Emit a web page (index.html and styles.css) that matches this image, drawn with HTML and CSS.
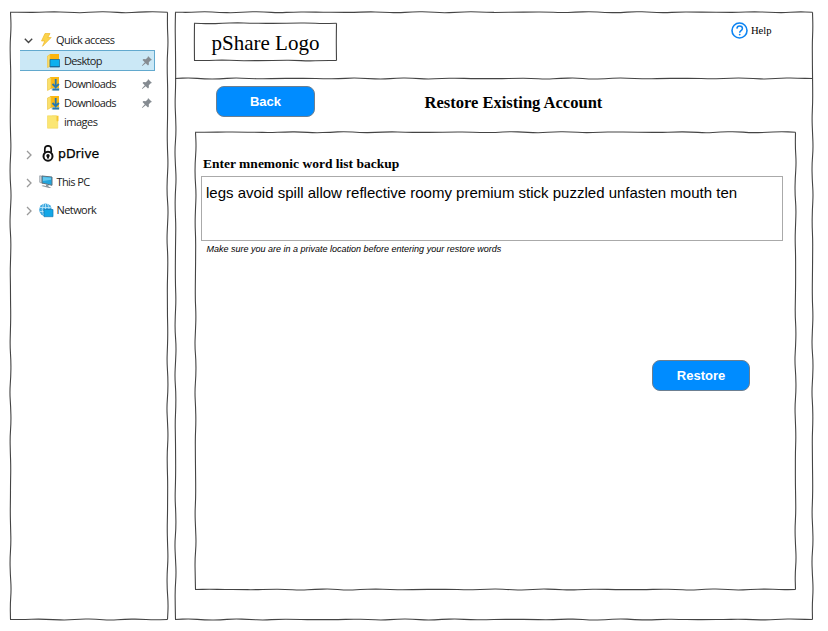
FILE: index.html
```html
<!DOCTYPE html>
<html lang="en">
<head>
<meta charset="utf-8">
<title>Restore Existing Account</title>
<link rel="stylesheet" href="styles.css">
</head>
<body>
<svg class="defs" aria-hidden="true">
  <symbol id="pin" viewBox="0 0 12 12"><path d="M7 1l4 4-1.200.3-2 2 .1 2.200L7 10.500 4.700 8.200 1.300 11 .9 10.600 3.800 7.300 1.500 5l1-.9 2.300.1 2-2z" fill="#858b91"/></symbol>
  <symbol id="chevron" viewBox="0 0 6 10"><path d="M1 1l4 4-4 4" fill="none" stroke="#9a9a9a" stroke-width="1.300"/></symbol>
  <symbol id="download" viewBox="0 0 13 14"><path d="M3 0h9v12H3z" fill="#fcb913"/><path d="M.5 2L4 .5v11L.5 13.500z" fill="#fbe06c" stroke="#eac23c" stroke-width=".6"/><path d="M4.500 11h8v2.500h-8z" fill="#cfd5c0"/><path d="M8.700 2v8M5.500 7l3.200 3.200L11.900 7M5.500 12.500h6.500" fill="none" stroke="#2478ad" stroke-width="1.800"/></symbol>
</svg>
<div class="app">
  <nav class="sidebar sketch" data-edges="trbl">
    <div class="row group quick">
      <svg class="chev" width="9" height="6" viewBox="0 0 9 6"><path d="M.8.8l3.700 3.700L8.200.8" fill="none" stroke="#444" stroke-width="1.400"/></svg>
      <svg class="gicon" width="14" height="14" viewBox="0 0 14 14"><path d="M5.500.5h5L8.300 4.500h3.400L3 13.300 5.200 8H2z" fill="#fbd34a" stroke="#efb92b" stroke-width=".7"/></svg>
      <span class="t-quick">Quick access</span>
    </div>
    <div class="row item selected">
      <svg class="ficon" width="13" height="14" viewBox="0 0 13 14"><path d="M3 0h9v6H3z" fill="#fcb50d"/><path d="M.5 2L3 .5v12L.5 13.500z" fill="#fbdc63" stroke="#f1bd35" stroke-width=".6"/><path d="M3 5.500h9.600V13H3z" fill="#0cb0ee" stroke="#176a9b" stroke-width=".8"/><path d="M3 12h9.600v1H3z" fill="#176a9b"/></svg>
      <span class="t-desktop">Desktop</span>
      <svg class="pin" width="12" height="12"><use href="#pin"/></svg>
    </div>
    <div class="row item dl1">
      <svg class="ficon" width="13" height="14"><use href="#download"/></svg>
      <span class="t-down">Downloads</span>
      <svg class="pin" width="12" height="12"><use href="#pin"/></svg>
    </div>
    <div class="row item dl2">
      <svg class="ficon" width="13" height="14"><use href="#download"/></svg>
      <span class="t-down">Downloads</span>
      <svg class="pin" width="12" height="12"><use href="#pin"/></svg>
    </div>
    <div class="row item images">
      <svg class="ficon" width="13" height="14" viewBox="0 0 13 14"><path d="M5 .8h6.500V6L9 8z" fill="#f7c52f"/><path d="M.5.800H9.500v5l1.300.7v6.700H.5z" fill="#fbe673" stroke="#f3d75b" stroke-width=".6"/></svg>
      <span class="t-images">images</span>
    </div>
    <div class="row group pdrive">
      <svg class="chev" width="6" height="10"><use href="#chevron"/></svg>
      <svg class="gicon" width="12" height="17" viewBox="0 0 12 17"><path d="M2.800 7V4a3.200 3.200 0 0 1 6.400 0V7" fill="none" stroke="#111" stroke-width="1.700"/><circle cx="6" cy="11.200" r="4.500" fill="#fff" stroke="#111" stroke-width="2"/><circle cx="6" cy="10.700" r="1.700" fill="#111"/><path d="M5.400 10h1.200l.5 3.500H4.900z" fill="#111"/></svg>
      <span class="t-pdrive">pDrive</span>
    </div>
    <div class="row group thispc">
      <svg class="chev" width="6" height="10"><use href="#chevron"/></svg>
      <svg class="gicon" width="15" height="14" viewBox="0 0 15 14"><path d="M.7.800l3 .4v7.300l-3-1.200z" fill="#d5dade" stroke="#89949c" stroke-width=".7"/><path d="M3 1l10 1v8.300L3 8z" fill="#22a5dd" stroke="#60717c" stroke-width="1"/><path d="M4 2l8 .8v2L4 6z" fill="#64c9ef"/><path d="M7 9.300l2.500.6v1.500L12.500 13H10l-7.500-2 1.500-.7 3 .7z" fill="#8c979e"/></svg>
      <span class="t-pc">This PC</span>
    </div>
    <div class="row group network">
      <svg class="chev" width="6" height="10"><use href="#chevron"/></svg>
      <svg class="gicon" width="15" height="15" viewBox="0 0 15 15"><circle cx="6.500" cy="6.800" r="6.300" fill="#3ba7df"/><path d="M.8 4.500h11M.8 8.500h6M6.500.800v8M4.500 1Q1.800 6.500 4.500 12M8.500 1q1.500 2.500 1.500 5" fill="none" stroke="#c5eafa" stroke-width=".8"/><path d="M5 6.500h9v7.200H5z" fill="#12a7e7" stroke="#1678b3" stroke-width=".7"/></svg>
      <span class="t-net">Network</span>
    </div>
  </nav>
  <main class="main sketch" data-edges="trbl">
    <header class="header sketch" data-edges="b">
      <div class="logo sketch" data-edges="trbl"><span>pShare Logo</span></div>
      <a class="help">
        <svg width="17" height="17" viewBox="0 0 17 17"><circle cx="8.500" cy="8.500" r="7.500" fill="none" stroke="#0d84f2" stroke-width="1.600"/><path d="M5.900 6.600C6 4.700 7.100 3.900 8.600 3.900c1.600 0 2.800 1 2.800 2.500 0 2.200-2.700 2.200-2.700 4.300" fill="none" stroke="#0d84f2" stroke-width="1.500"/><circle cx="8.700" cy="12.600" r=".9" fill="#0d84f2"/></svg>
        <span>Help</span>
      </a>
    </header>
    <div class="titlebar">
      <button class="btn">Back</button>
      <h1>Restore Existing Account</h1>
    </div>
    <section class="panel sketch" data-edges="trbl">
      <label class="label">Enter mnemonic word list backup</label>
      <div class="words">legs avoid spill allow reflective roomy premium stick puzzled unfasten mouth ten</div>
      <p class="hint">Make sure you are in a private location before entering your restore words</p>
      <button class="btn restore">Restore</button>
    </section>
  </main>
</div>
<script src="sketch.js"></script>
</body>
</html>
```
FILE: styles.css
```css
* { box-sizing: border-box; }
body { margin: 0; background: #fff; color: #000; font-family: "Liberation Serif", serif; }
.defs { display: none; }
.app { display: flex; gap: 7px; height: 631px; padding: 12px 15px 11px 10px; }
.sketch { position: relative; }
.outline { position: absolute; top: 0; left: 0; overflow: visible; pointer-events: none; }
.outline path { fill: none; stroke: #444; stroke-width: 1.1; }

.sidebar { width: 158px; flex: none; padding: 19px 13px 0 10px; font: 11px/18px "Open Sans", "Noto Sans", sans-serif; color: #222; }
.row { display: flex; align-items: center; height: 18px; white-space: nowrap; }
.chev { flex: none; margin-left: 6px; width: 6px; }
.group:not(.quick) .chev { margin-top: 2px; }
.quick .chev { width: 9px; margin-left: 4px; margin-top: 1px; }
.gicon { flex: none; width: 15px; margin: 0 2.5px 0 7px; }
.quick .gicon { margin-left: 6px; margin-right: 2px; }
.ficon { flex: none; margin: 0 4px 0 27px; }
.pin { margin-left: auto; margin-right: 2px; }
.selected { height: 21px; margin-top: 1px; background: #cbe8f6; border: solid #62a9ce; border-width: 1px 1px 1px 0; }
.selected .pin { margin-right: 1px; }
.dl1 { margin-top: 4px; }
.dl2 { margin-top: 1px; }
.images { margin-top: 1px; }
.pdrive { margin-top: 14px; }
.pdrive .gicon { width: 12px; margin: -2px 4px 0 10px; }
.thispc, .network { margin-top: 10px; }
.t-quick { letter-spacing: -.57px; }
.t-desktop { letter-spacing: -.65px; }
.t-down { letter-spacing: -.6px; }
.t-images { letter-spacing: -.5px; }
.t-pdrive { font: 12.5px/18px "DejaVu Sans", sans-serif; color: #000; -webkit-text-stroke: .25px #000; }
.t-pc { letter-spacing: -.6px; }
.t-net { letter-spacing: -.57px; }

.main { flex: 1; display: flex; flex-direction: column; }
.header { flex: none; height: 67px; display: flex; justify-content: space-between; align-items: flex-start; padding: 11px 41.5px 0 19px; }
.logo { width: 143px; height: 38px; font-size: 21px; line-height: 40px; text-align: center; }
.help { display: flex; align-items: center; gap: 3px; margin-top: -1px; font-size: 10.6px; line-height: 17px; }
.titlebar { flex: none; display: flex; align-items: center; height: 46px; padding-left: 41px; }
h1 { margin: 2px 0 0 109.5px; font-size: 16.55px; line-height: 20px; white-space: nowrap; }
.btn { flex: none; width: 99px; height: 31px; padding: 0; border: 1px solid #6c7f91; border-radius: 8px; background: #008cff; color: #fff; font: bold 13px/28px "Liberation Sans", sans-serif; }
.titlebar .btn { margin-top: -1px; }
.panel { flex: none; display: flex; flex-direction: column; height: 458px; margin: 6.5px 17.5px 0 19.5px; padding: 24.5px 12.5px 0 6.5px; }
.label { margin-left: 2px; font-size: 13.5px; line-height: 16px; font-weight: bold; }
.words { height: 65px; margin-top: 4px; padding: 7px 4px; border: 1px solid #aaa; font: 15px/18px "Liberation Sans", sans-serif; white-space: nowrap; }
.hint { margin: 2px 0 0 5.5px; font: italic 9px/12px "Liberation Sans", sans-serif; }
.restore { align-self: flex-end; width: 98px; margin: 105px 33px 0 0; }
```
FILE: sketch.js
```js
// Draws hand-sketched outlines around every .sketch element.
function wobble(x1, y1, x2, y2, seed) {
  const length = Math.hypot(x2 - x1, y2 - y1);
  const steps = Math.max(2, Math.round(length / 15));
  const nx = -(y2 - y1) / length, ny = (x2 - x1) / length;
  let d = `M${x1} ${y1}`;
  let px = x1, py = y1;
  for (let i = 1; i <= steps; i++) {
    const t = i / steps;
    const off = i === steps ? 0 : Math.sin(i * 1.7 + seed) * 0.45 + Math.sin(i * 4.1 + seed * 2) * 0.35;
    const x = x1 + (x2 - x1) * t + nx * off;
    const y = y1 + (y2 - y1) * t + ny * off;
    d += `Q${px} ${py} ${(px + x) / 2} ${(py + y) / 2}`;
    px = x; py = y;
  }
  return d + `L${px} ${py}`;
}
document.querySelectorAll(".sketch").forEach((el, n) => {
  const w = el.offsetWidth - 0.5, h = el.offsetHeight - 0.5;
  const edges = { t: [0, 0.2, w, 0.2], r: [w, 0.2, w, h], b: [0, h, w, h], l: [0.5, 0.2, 0.5, h] };
  const ns = "http://www.w3.org/2000/svg";
  const svg = document.createElementNS(ns, "svg");
  svg.setAttribute("class", "outline");
  svg.setAttribute("width", el.offsetWidth);
  svg.setAttribute("height", el.offsetHeight);
  [...el.dataset.edges].forEach((e, i) => {
    const path = document.createElementNS(ns, "path");
    path.setAttribute("d", wobble(...edges[e], n * 1.7 + i));
    svg.appendChild(path);
  });
  el.appendChild(svg);
});
```
